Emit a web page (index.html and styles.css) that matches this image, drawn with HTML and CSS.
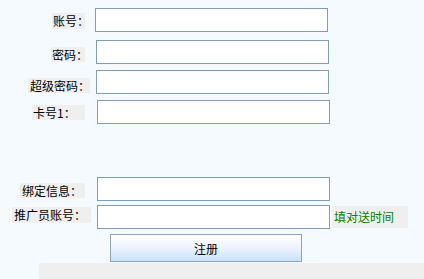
FILE: index.html
```html
<!DOCTYPE html>
<html lang="zh-CN">
<head>
<meta charset="utf-8">
<title>注册</title>
<link rel="stylesheet" href="styles.css">
</head>
<body>
<form class="reg">
  <div class="row r1">
    <div class="lw"><span class="lab">账号：</span></div>
    <input class="inp" type="text">
  </div>
  <div class="row r2">
    <div class="lw"><span class="lab">密码：</span></div>
    <input class="inp" type="password">
  </div>
  <div class="row r3">
    <div class="lw"><span class="lab">超级密码：</span></div>
    <input class="inp" type="password">
  </div>
  <div class="row r4">
    <div class="lw"><span class="lab">卡号1：</span></div>
    <input class="inp" type="text">
  </div>
  <div class="row r5">
    <div class="lw"><span class="lab">绑定信息：</span></div>
    <input class="inp" type="text">
  </div>
  <div class="row r6">
    <div class="lw"><span class="lab">推广员账号：</span></div>
    <input class="inp" type="text">
    <span class="note">填对送时间</span>
  </div>
  <div class="btnrow">
    <button class="btn" type="button">注册</button>
  </div>
  <div class="foot"></div>
</form>
</body>
</html>
```
FILE: styles.css
```css
html, body {
  margin: 0;
  padding: 0;
  background: #f5faff;
  font-family: "Noto Sans CJK SC", "Noto Sans", sans-serif;
  font-size: 12px;
  color: #000;
}
.reg {
  display: flex;
  flex-direction: column;
  padding-top: 8px;
  margin: 0;
}
.row {
  display: flex;
  align-items: flex-start;
  height: 24px;
}
.lw {
  display: flex;
  justify-content: flex-end;
  flex: none;
}
.lab {
  display: block;
  background: #efefef;
  white-space: nowrap;
  overflow: visible;
  padding-left: 1px;
  box-sizing: border-box;
  height: 16px;
  line-height: 16px;
}
.inp {
  flex: none;
  box-sizing: border-box;
  width: 233px;
  height: 24px;
  margin: 0;
  padding: 0 3px;
  border: 1px solid #7f9db9;
  background: #fff;
  font: inherit;
}
.r1 .lw { width: 85px; }
.r1 .lab { width: 33px; margin-top: 5px; }
.r1 .inp { margin-left: 10px; }

.r2 { margin-top: 8px; }
.r2 .lw { width: 85px; }
.r2 .lab { width: 34px; margin-top: 7px; height: 15px; }
.r2 .inp { margin-left: 11px; }

.r3 { margin-top: 6px; }
.r3 .lw { width: 90px; }
.r3 .lab { width: 62px; margin-top: 8px; height: 15px; padding-left: 2px; }
.r3 .inp { margin-left: 6px; }

.r4 { margin-top: 6px; }
.r4 .lw { width: 85px; }
.r4 .lab { width: 53px; margin-top: 5px; height: 15px; }
.r4 .inp { margin-left: 12px; }

.r5 { margin-top: 53px; }
.r5 .lw { width: 85px; }
.r5 .lab { width: 65px; margin-top: 6px; height: 15px; padding-left: 2px; }
.r5 .inp { margin-left: 12px; }

.r6 { margin-top: 4px; }
.r6 .lw { width: 91px; }
.r6 .lab { width: 79px; margin-top: 2px; padding-left: 2px; }
.r6 .inp { margin-left: 6px; }

.note {
  flex: none;
  margin-left: 2px;
  margin-top: 1px;
  width: 76px;
  height: 22px;
  line-height: 22px;
  padding-left: 2px;
  box-sizing: border-box;
  background: #efefef;
  color: #008000;
  white-space: nowrap;
}
.btnrow {
  display: flex;
  margin-top: 5px;
  padding-left: 110px;
}
.btn {
  box-sizing: border-box;
  width: 192px;
  height: 28px;
  margin: 0;
  padding: 0;
  border: 1px solid #8ea2b8;
  background: linear-gradient(to bottom, #ffffff 0%, #eef5fd 45%, #c9e1fb 100%);
  font: inherit;
  color: #000;
}
.foot {
  margin-top: 1px;
  margin-left: 39px;
  height: 20px;
  background: #efefef;
}
```
